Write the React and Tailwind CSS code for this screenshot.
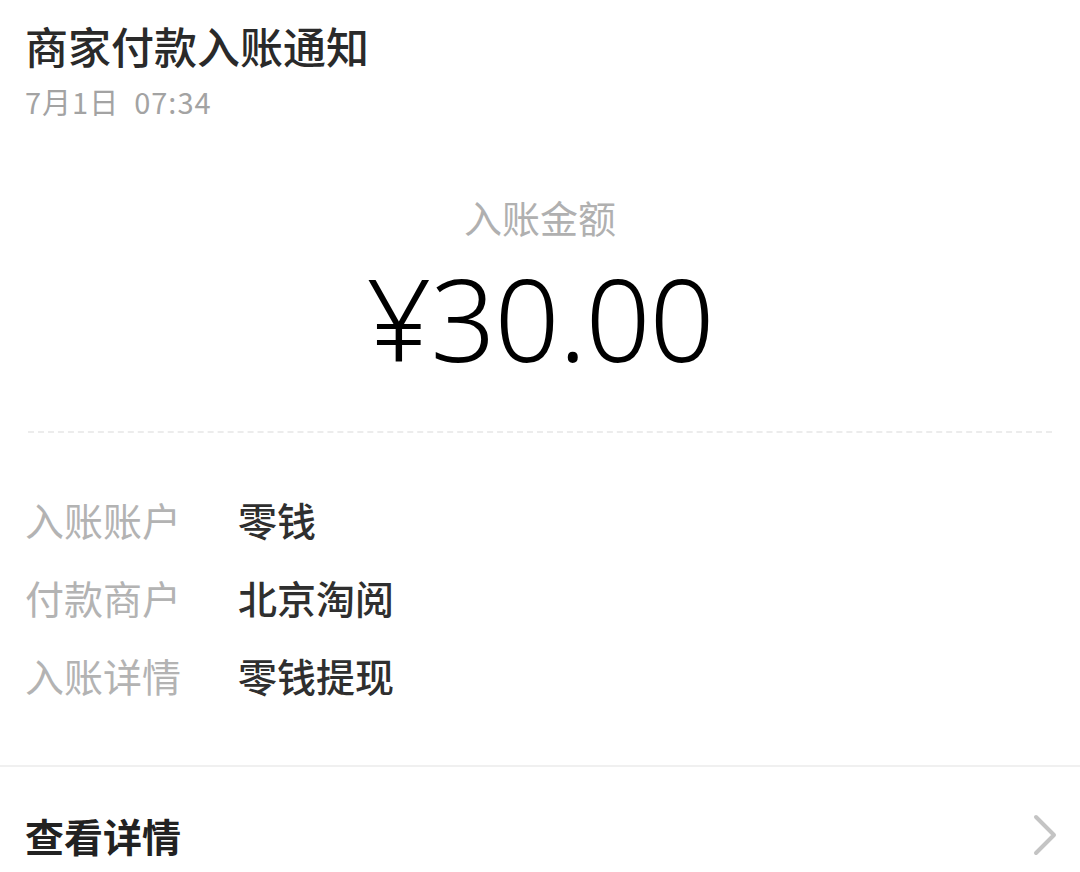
import React from 'react';

const rows = [
  ['入账账户', '零钱'],
  ['付款商户', '北京淘阅'],
  ['入账详情', '零钱提现'],
];

export default function App() {
  return (
    <div
      className="w-[1080px] h-[872px] bg-white overflow-hidden flex flex-col"
      style={{ fontFamily: '"Noto Sans CJK SC", "Noto Sans", sans-serif' }}
    >
      {/* Header */}
      <div className="px-[25px] pt-[19px]">
        <div className="text-[43px] leading-[52px] text-[#2a2a2a] font-medium">商家付款入账通知</div>
        <div className="text-[29px] leading-[36px] text-[#a3a3a3] mt-[12px] tracking-[1px]">7月1日&nbsp;&nbsp;07:34</div>
      </div>

      {/* Amount */}
      <div className="flex flex-col items-center mt-[76px]">
        <div className="text-[38px] leading-[44px] text-[#b0b0b0]">入账金额</div>
        <div
          className="text-[114px] leading-[118px] text-black font-light mt-[20px] tracking-[-1px]"
          style={{ fontFamily: '"Noto Sans", sans-serif' }}
        >
          ¥30.00
        </div>
      </div>

      {/* Dashed divider */}
      <div className="mx-[28px] mt-[54px] border-t-2 border-dashed border-[#ececec]" />

      {/* Details */}
      <div className="px-[25px] pt-[60px] flex flex-col gap-[26px]">
        {rows.map(([k, v]) => (
          <div key={k} className="flex items-center text-[39px] leading-[52px]">
            <div className="w-[213px] text-[#b3b3b3]">{k}</div>
            <div className="text-[#2f2f2f] font-medium">{v}</div>
          </div>
        ))}
      </div>

      {/* Footer */}
      <div className="mt-[64px] border-t-2 border-[#f0f0f0]" />
      <div className="flex items-center justify-between pl-[25px] pr-[22px] pt-[42px]">
        <div className="text-[39px] leading-[52px] text-[#222] font-bold">查看详情</div>
        <svg width="26" height="44" viewBox="0 0 26 44">
          <path d="M4 4 L22 22 L4 40" fill="none" stroke="#c4c4c4" strokeWidth="4" strokeLinecap="round" strokeLinejoin="round" />
        </svg>
      </div>
    </div>
  );
}
